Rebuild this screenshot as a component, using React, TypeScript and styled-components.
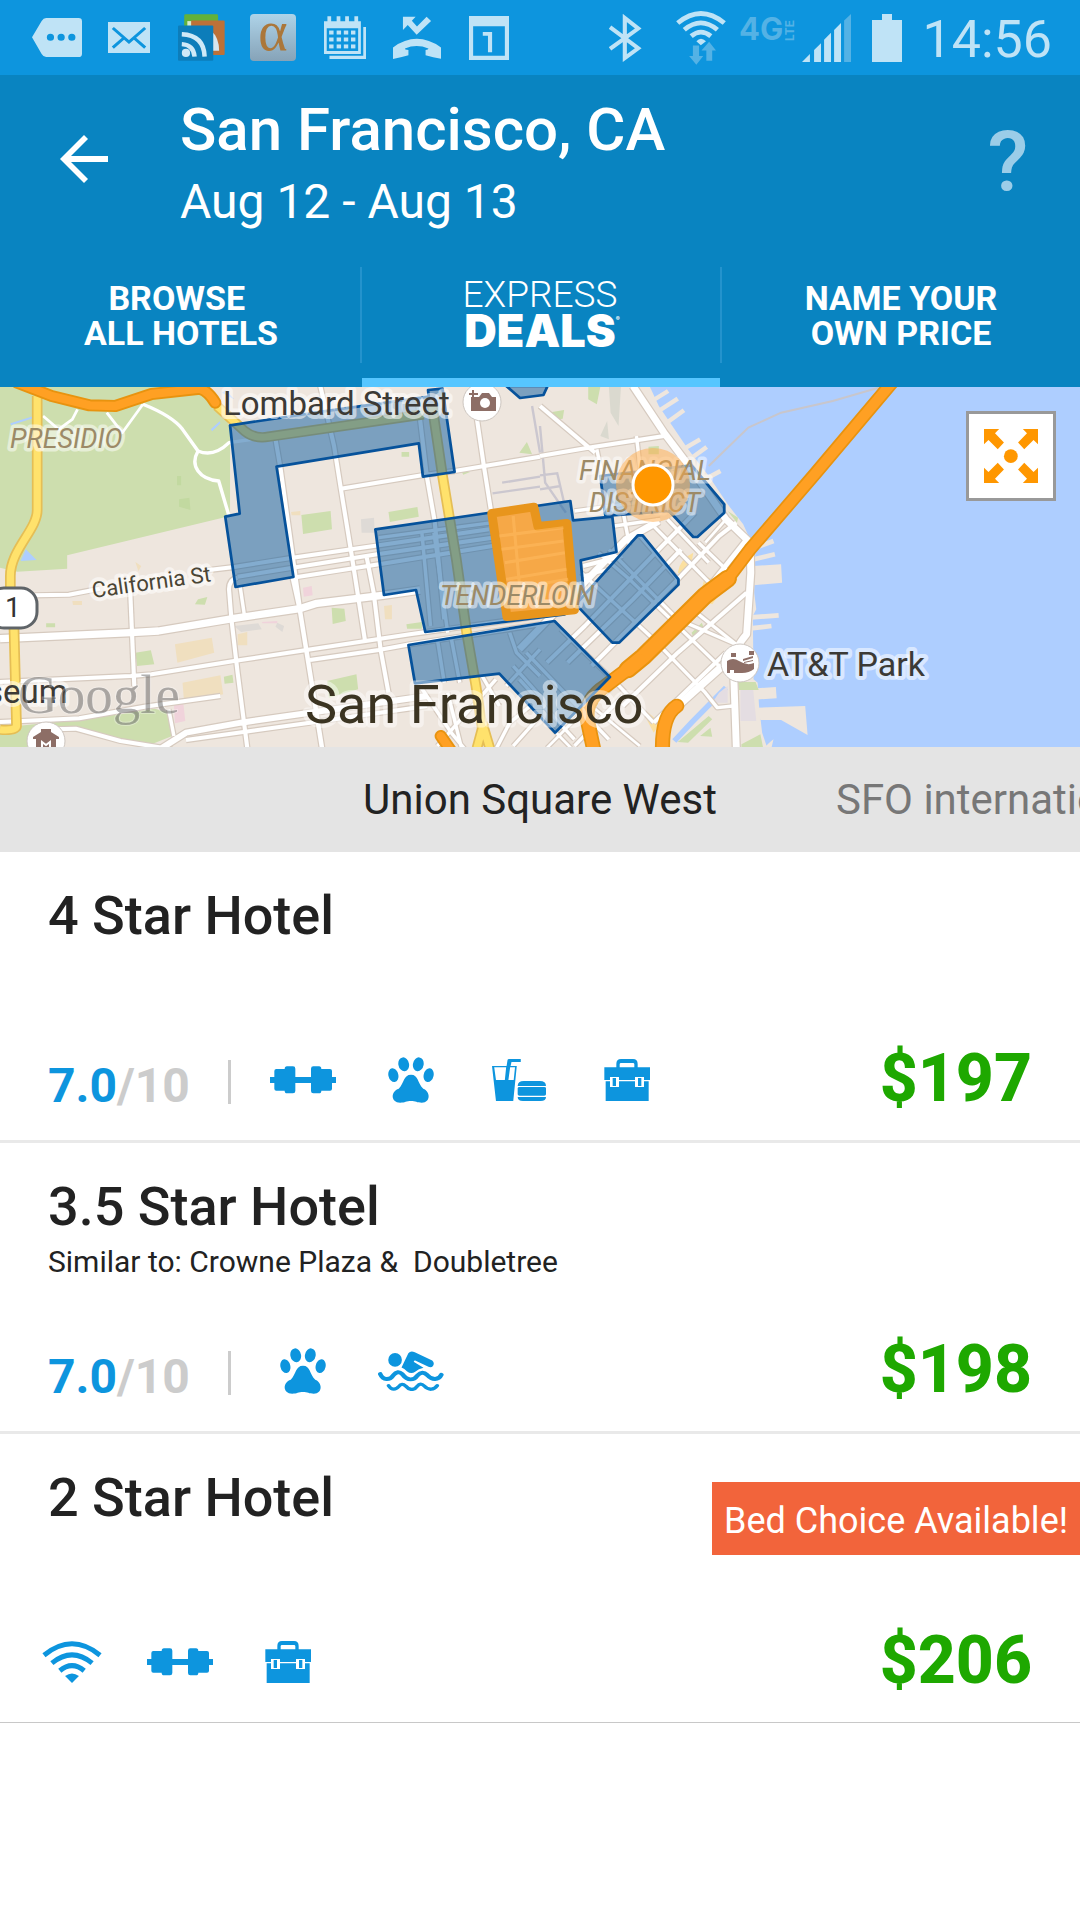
import React from "react";
import styled, { createGlobalStyle } from "styled-components";

const GlobalStyle = createGlobalStyle`
  *, *::before, *::after { box-sizing: border-box; }
  body {
    margin: 0;
    background: #fff;
    color: #222;
    font-family: Roboto, "Noto Sans", sans-serif;
  }
  h1, h2, p, ul { margin: 0; padding: 0; font-weight: inherit; }
  button { font: inherit; color: inherit; background: none; border: 0; padding: 0; cursor: pointer; }
  a { color: inherit; text-decoration: none; }
  ul { list-style: none; }
`;

/* ---------- Layout parts ---------- */

const StatusBar = styled.div`
  display: flex;
  align-items: center;
  justify-content: space-between;
  height: 75px;
  padding: 0 28px 0 21px;
  background: #0d95de;
  color: #bfe3f6;
`;

const StatusGroup = styled.div`
  display: flex;
  align-items: center;
`;

const StatusCell = styled.span<{ $w?: number; $raised?: boolean }>`
  display: flex;
  align-items: center;
  justify-content: center;
  width: ${(p) => p.$w ?? 72}px;
  height: 75px;
  padding-bottom: ${(p) => (p.$raised ? 18 : 0)}px;
`;

const Clock = styled.time`
  padding: 5px 0 0 6px;
  font-size: 52px;
  line-height: 70px;
  font-weight: 400;
`;

const Header = styled.header`
  background: #0984c1;
  color: #fff;
`;

const TitleRow = styled.div`
  display: flex;
  align-items: center;
  height: 168px;
`;

const BackButton = styled.button`
  display: flex;
  align-items: center;
  justify-content: center;
  width: 168px;
  height: 168px;
`;

const Titles = styled.div`
  flex: 1;
  padding: 14px 12px 0;
`;

const City = styled.h1`
  font-size: 60px;
  line-height: 72px;
  font-weight: 500;
`;

const Dates = styled.p`
  font-size: 48px;
  line-height: 72px;
`;

const HelpButton = styled.button`
  width: 144px;
  height: 168px;
  padding-top: 8px;
  font-size: 84px;
  line-height: 160px;
  font-weight: 500;
  color: #9bcde8;
`;

const Tabs = styled.nav`
  display: grid;
  grid-template-columns: repeat(3, 1fr);
  height: 144px;
  padding-top: 24px;
`;

const Tab = styled.button<{ $active?: boolean }>`
  display: flex;
  flex-direction: column;
  justify-content: space-between;
  height: 120px;

  &::after {
    content: "";
    align-self: stretch;
    height: 9px;
    margin-left: 2px;
    background: ${(p) => (p.$active ? "#56c6ff" : "transparent")};
  }
`;

const TabLabel = styled.span<{ $divided?: boolean }>`
  width: 100%;
  height: 96px;
  padding-top: 14px;
  border-left: 2px solid ${(p) => (p.$divided ? "#2493cd" : "transparent")};
  font-size: 34px;
  line-height: 35px;
  font-weight: 700;
  text-align: center;
`;

const ExpressLogo = styled.span`
  display: flex;
  flex-direction: column;
  align-items: center;
  width: 100%;
  height: 96px;
  padding: 10px 2px 0 0;
  border-left: 2px solid #2493cd;
`;

const ExpressThin = styled.span`
  font-size: 37px;
  line-height: 36px;
  font-weight: 300;
`;

const ExpressBold = styled.span`
  display: flex;
  font-family: Inter, "Liberation Sans", sans-serif;
  font-size: 45px;
  line-height: 36px;
  font-weight: 900;
`;

const Registered = styled.small`
  width: 0;
  font-size: 6px;
  line-height: 12px;
`;

const MapPanel = styled.section`
  position: relative;
  height: 360px;
  overflow: hidden;
  background: #aeceff;
`;

const MapDrawing = styled.svg`
  display: block;
  width: 100%;
  height: 100%;
  font-family: Roboto, "Noto Sans", sans-serif;
`;

const ExpandButton = styled.button`
  position: absolute;
  top: 24px;
  right: 24px;
  display: flex;
  align-items: center;
  justify-content: center;
  width: 90px;
  height: 90px;
  border: 3px solid #999;
  background: #fff;
`;

const AreaBar = styled.nav`
  display: grid;
  grid-template-columns: minmax(0, 1fr) auto minmax(0, 1fr);
  column-gap: 119px;
  height: 105px;
  overflow: hidden;
  background: #e4e4e4;
  font-size: 42px;
  line-height: 105px;
  white-space: nowrap;
`;

const Area = styled.button<{ $current?: boolean; $col: number }>`
  grid-column: ${(p) => p.$col};
  color: ${(p) => (p.$current ? "#222" : "#777")};
  text-align: left;
`;

const Hotels = styled.ul`
  display: flex;
  flex-direction: column;
`;

const Hotel = styled.li`
  border-bottom: 3px solid #e9e9e9;
  &:last-child {
    border-bottom: 1px solid #c8c8c8;
  }
`;

const HotelLink = styled.a`
  display: flex;
  flex-direction: column;
  justify-content: space-between;
  height: 288px;
  padding-top: 31px;
`;

const HotelTop = styled.div`
  display: flex;
  justify-content: space-between;
  padding-left: 48px;
`;

const HotelName = styled.h2`
  font-size: 54px;
  line-height: 66px;
  font-weight: 500;
`;

const Similar = styled.p`
  font-size: 30px;
  line-height: 44px;
  white-space: pre;
`;

const Badge = styled.span`
  align-self: flex-start;
  margin-top: 17px;
  padding: 5px 12px 0;
  background: #f2643b;
  color: #fff;
  font-size: 36px;
  line-height: 68px;
`;

const HotelBottom = styled.div`
  display: flex;
  align-items: center;
  height: 120px;
  padding: 0 48px 0 18px;
`;

const Rating = styled.div`
  display: flex;
  align-items: center;
  width: 213px;
  height: 44px;
  margin: 4px 18px 0 0;
  padding: 8px 0 0 30px;
  border-right: 3px solid #ccc;
  font-size: 48px;
  line-height: 36px;
  font-weight: 700;
`;

const Score = styled.span`
  color: #0d95de;
`;

const OutOf = styled.span`
  color: #ccc;
`;

const Amenities = styled.div`
  display: flex;
  flex: 1;
  color: #0d95de;
`;

const AmenityCell = styled.span`
  display: flex;
  align-items: center;
  justify-content: center;
  width: 108px;
`;

const Price = styled.strong`
  padding-bottom: 3px;
  color: #1ea800;
  font-size: 66px;
  line-height: 78px;
  font-weight: 800;
`;

/* ---------- Icons ---------- */

type GlyphProps = {
  w: number;
  h: number;
  box: string;
  label?: string;
  children: React.ReactNode;
};

const Glyph = ({ w, h, box, label, children }: GlyphProps) => (
  <svg
    width={w}
    height={h}
    viewBox={box}
    preserveAspectRatio="none"
    fill="currentColor"
    role={label ? "img" : undefined}
    aria-label={label}
    aria-hidden={label ? undefined : true}
  >
    {children}
  </svg>
);

const Dumbbell = () => (
  <Glyph w={66} h={28} box="441 624 198 84" label="Fitness center">
    <path d="M441 657h13v-18q0-6 6-6h25q0-8 7-8h18q7 0 7 7v25h47v-25q0-7 7-7h17q7 0 7 8h26q6 0 6 6v18h12v18h-12v17q0 6-6 6h-26q0 8-7 8h-17q-7 0-7-7v-24h-47v24q0 7-7 7h-18q-7 0-7-8h-25q-6 0-6-6v-17h-13z" />
  </Glyph>
);

const Paw = () => (
  <Glyph w={46} h={46} box="732 533 120 139" label="Pets allowed">
    <ellipse cx="746" cy="588" rx="13" ry="21" transform="rotate(-10 746 588)" />
    <ellipse cx="773" cy="555" rx="14" ry="21" transform="rotate(-8 773 555)" />
    <ellipse cx="811" cy="555" rx="14" ry="21" transform="rotate(8 811 555)" />
    <ellipse cx="838" cy="588" rx="13" ry="21" transform="rotate(10 838 588)" />
    <path d="M792 587C812 587 808 612 824 629C842 636 845 671 820 671C808 671 804 666 792 666C780 666 776 671 764 671C738 671 739 636 760 629C775 612 772 587 792 587Z" />
  </Glyph>
);

const Food = () => (
  <Glyph w={54} h={42} box="1101 87 122 126" label="Restaurant">
    <path d="M1101 108h33l2-17q0-4 4-4h26v9h-21l-2 12h14l-8 105h-39zM1106 112l4 38h20l3-38zM1142 112l-4 38h12l3-38z" fillRule="evenodd" />
    <path d="M1159 168q0-15 14-15h36q14 0 14 15zM1163 171h56q4 0 4 4v18q0 4-4 4h-56q-4 0-4-4v-18q0-4 4-4zM1159 201h64q0 12-12 12h-40q-12 0-12-12z" />
  </Glyph>
);

const Briefcase = () => (
  <Glyph w={46} h={42} box="795 603 138 126" label="Business center">
    <path d="M796 628h36v-10q0-15 14-15h36q14 0 14 15v10h37v38h-18v-9h-27v9h-48v-9h-27v9h-17zM842 628h44v-9q0-4-4-4h-36q-4 0-4 4z" fillRule="evenodd" />
    <path d="M800 670h13v17h27v-17h48v17h27v-17h14v59H800zM821 660h10v24h-10zM897 660h10v24h-10z" />
  </Glyph>
);

const Swimmer = () => (
  <Glyph w={66} h={40} box="987 542 174 121" label="Pool">
    <ellipse cx="1032" cy="569" rx="18" ry="21" />
    <path d="M1049 592L1067 549Q1073 540 1084 546L1130 571Q1137 578 1132 587Q1128 593 1120 590L1085 571Q1079 571 1083 576L1107 593Q1094 596 1085 605Q1074 613 1063 603Q1057 596 1049 592Z" />
    <g fill="none" stroke="currentColor" strokeLinecap="round" strokeLinejoin="round">
      <path strokeWidth="12" d="M993 612C1000 631 1018 631 1027 616Q1039 599 1051 612C1065 634 1082 631 1091 616Q1104 600 1117 615C1129 631 1147 631 1154 614" />
      <path strokeWidth="10" d="M1015 647C1023 661 1034 660 1042 649Q1050 637 1060 648C1070 662 1083 661 1090 649Q1099 636 1109 648C1121 662 1135 660 1143 647" />
    </g>
  </Glyph>
);

const WifiAmenity = () => (
  <Glyph w={60} h={42} box="125 602 182 127" label="Free Wi-Fi">
    <g fill="none" stroke="currentColor" strokeWidth="15">
      <path d="M131 645Q216 576 301 645" />
      <path d="M155 669Q216 619 277 669" />
      <path d="M179 692Q216 661 253 692" />
    </g>
    <path d="M195 708Q216 692 237 708L216 729Z" />
  </Glyph>
);

const BackArrow = () => (
  <Glyph w={48} h={48} box="0 0 48 48">
    <path d="M24 0l4 4-17 17h37v6H11l17 17-4 4L0 24z" />
  </Glyph>
);

const Expand = () => (
  <Glyph w={54} h={54} box="1289 128 157 163">
    <g fill="#ff9700">
      <ellipse cx="1367" cy="210" rx="20" ry="21" />
      <path d="M1289 128h44l-12 13 26 28-18 20-27-28-13 13zM1446 128h-44l12 13-26 28 18 20 27-28 13 13zM1289 291h44l-12-13 26-28-18-20-27 28-13-13zM1446 291h-44l12-13-26-28 18-20 27 28 13-13z" />
    </g>
  </Glyph>
);

/* ---------- Status bar icons ---------- */

const MessageIcon = () => (
  <Glyph w={50} h={39} box="93 54 145 117">
    <path fillRule="evenodd" d="M93 112L121 63Q126 54 134 54H228Q238 54 238 64V161Q238 171 228 171H134Q126 171 121 162ZM136 112a10 10 0 1 0 21 0a10 10 0 1 0-21 0ZM167 112a10 10 0 1 0 21 0a10 10 0 1 0-21 0ZM198 112a10 10 0 1 0 21 0a10 10 0 1 0-21 0Z" />
  </Glyph>
);

const MailIcon = () => (
  <Glyph w={42} h={31} box="314 66 122 93">
    <path d="M314 66h122v93H314z" />
    <path d="M328 84L375 126L422 84M328 143L360 114M422 143L390 114" fill="none" stroke="#0d95de" strokeWidth="9" />
  </Glyph>
);

const FeedIcon = () => (
  <Glyph w={47} h={47} box="515 45 136 139">
    <rect x="533" y="46" width="98" height="60" rx="4" fill="#62b13a" />
    <path d="M542 66h30v20h-30z" fill="#d5ecd0" />
    <rect x="553" y="64" width="97" height="102" rx="3" fill="#bd7138" />
    <path d="M612 95Q634 115 634 154H612Z" fill="#d8e6ee" />
    <rect x="515" y="79" width="102" height="104" rx="3" fill="#0c7dba" />
    <circle cx="538" cy="160" r="12" fill="#cfe9f7" />
    <path d="M526 134Q560 136 563 171M526 105Q590 108 592 171" fill="none" stroke="#cfe9f7" strokeWidth="13" />
  </Glyph>
);

const AlphaIcon = () => (
  <svg width="46" height="47" viewBox="0 0 46 47" aria-hidden="true">
    <defs>
      <linearGradient id="alphaTile" x1="0" y1="0" x2="0" y2="1">
        <stop offset="0" stopColor="#aed3e8" />
        <stop offset="1" stopColor="#86a3b8" />
      </linearGradient>
    </defs>
    <rect width="46" height="47" rx="4" fill="url(#alphaTile)" />
    <text x="23" y="36" textAnchor="middle" fontFamily="Liberation Serif, serif" fontSize="56" fill="#ab773a">
      α
    </text>
  </svg>
);

const CalendarIcon = () => (
  <Glyph w={42} h={43} box="940 50 123 130">
    <path d="M956 170h99V83h8v97H956z" />
    <path
      fillRule="evenodd"
      d="M940 66h10V51h11v15h16V51h11v15h14V51h11v15h16V51h11v15h8v99H940zM948 87v69h92V87z"
    />
    {[94, 115, 136].map((y) =>
      [955, 977, 998, 1019].map((x) => <path key={`${x}-${y}`} d={`M${x} ${y}h13v12h-13z`} />)
    )}
  </Glyph>
);

const MissedCallIcon = () => (
  <Glyph w={48} h={43} box="1141 48 140 130">
    <path d="M1170 50H1207L1196 62L1211 80L1239 50L1252 63L1210 105L1184 75L1170 90Z" />
    <path d="M1141 143Q1210 91 1281 143V177Q1258 174 1236 167V151Q1246 150 1244 146Q1210 132 1176 146Q1174 150 1186 151V167Q1163 174 1141 178Z" />
  </Glyph>
);

const DayIcon = () => (
  <Glyph w={40} h={44} box="1362 48 116 132">
    <path fillRule="evenodd" d="M1362 48h116v132h-116zM1374 79v88h92V79z" />
    <path d="M1402 96h27v61h-12v-50h-15z" />
  </Glyph>
);

const BluetoothIcon = () => (
  <Glyph w={33} h={48} box="200 38 96 146">
    <path fill="none" stroke="currentColor" strokeWidth="12" d="M203 78L285 142L246 172V50L285 82L203 144" />
  </Glyph>
);

const WifiStatusIcon = () => (
  <Glyph w={50} h={54} box="392 29 145 161">
    <g fill="none" stroke="currentColor" strokeWidth="14">
      <path d="M397 65Q464 8 532 65" />
      <path d="M416 85Q464 44 512 85" />
      <path d="M436 104Q464 80 493 104" />
    </g>
    <path d="M451 119Q464 104 479 119L464 131Z" />
    <path fill="#54b2e5" d="M441 132h18v31h12l-20 26-21-26h11zM480 177v-30h-14l22-26 20 26h-11v30z" />
  </Glyph>
);

const LteIcon = () => (
  <svg width="56" height="32" viewBox="0 0 56 32" fill="#54b2e5" aria-hidden="true" fontFamily="Inter, sans-serif">
    <text x="0" y="27" fontSize="31" fontWeight="700">4G</text>
    <text transform="translate(55 28) rotate(-90)" fontSize="12" fontWeight="700">LTE</text>
  </svg>
);

const SignalIcon = () => (
  <Glyph w={49} h={48} box="761 38 142 145">
    <path d="M761 183L784 159V183ZM796 147L816 126V183H796ZM825 116L845 95V183H825ZM854 86L874 65V183H854Z" />
    <path fill="#54b2e5" d="M883 58L903 38V183H883Z" />
  </Glyph>
);

const BatteryIcon = () => (
  <Glyph w={30} h={48} box="961 36 87 144">
    <path d="M990 36h29v18h29v126h-87V54h29z" />
  </Glyph>
);

/* ---------- Map ---------- */

/* Street geometry is kept in map units; the east half starts at x = 1568. */
type Street = [number, string];

const WEST_STREETS: Street[] = [
  [22, "M0 758L380 740L460 735L680 697L870 668L920 652L1110 628L1220 612"],
  [12, "M0 888L380 870L440 865L680 825L890 792L1190 745L1568 690"],
  [12, "M900 822L1100 792L1190 775L1568 715"],
  [12, "M100 628L200 626L290 608M600 553L680 543L850 515L1100 478L1420 430"],
  [12, "M690 572L850 545L1095 505L1430 455"],
  [12, "M850 575L1110 533L1430 480"],
  [10, "M1100 455L1430 410"],
  [12, "M0 1008L110 1003L230 997L420 962L640 930"],
  [18, "M470 1086L540 1040L700 1010L1240 930"],
  [12, "M540 1062L900 1010L1240 960"],
  [12, "M150 1030L220 1028L350 1065L500 1090"],
  [12, "M378 615L390 900"],
  [12, "M800 160L815 250L870 660"],
  [12, "M672 700L665 610Q665 580 690 575M672 700L690 860L718 1086"],
  [10, "M697 600L710 690"],
  [13, "M850 575L870 668L900 860L935 1086"],
  [12, "M930 0L970 180L990 310L1020 500L1060 765"],
  [12, "M1065 515L1085 620L1105 790L1128 920"],
  [12, "M1215 60L1240 275L1262 405L1290 700"],
  [10, "M1225 440L1250 720M1260 440L1300 740"],
  [12, "M1385 100L1405 240L1425 370"],
  [12, "M990 308L1225 268L1320 255L1568 212"],
  [10, "M1270 760L1290 890M1310 755L1335 890"],
  [10, "M490 970L505 1050"],
  [10, "M1220 900L1310 1040L1350 1090M1270 1080L1440 880M1340 1086L1300 920M1490 1080L1568 990"],
  [10, "M1480 740L1500 800L1568 870M1568 790L1470 900M1568 930L1490 840"],
  [10, "M1400 870L1450 960M1440 1090L1480 1010L1540 960"],
  [10, "M415 55Q500 90 530 130L575 195Q620 215 665 170L800 150"],
  [10, "M575 195C550 240 580 280 635 285L665 390"],
  [8, "M310 80L355 140L415 55M125 90L170 130L210 100L225 70"],
];

const EAST_STREETS: Street[] = [
  [20, "M270 0L360 140L440 250L540 400L610 470L612 560L600 745Q560 790 562 850L570 1086"],
  [12, "M0 210L140 185L360 150M0 60L160 200"],
  [10, "M280 150L290 240L300 300M165 190L185 290"],
  [10, "M100 375L280 350M215 420L350 400M240 370L260 480"],
  [20, "M-60 790L100 620L250 460L345 405"],
  [12, "M20 830L130 720L345 490L450 380M125 540L240 510"],
  [10, "M125 570L200 550"],
  [12, "M80 830L270 640L410 490M150 840L400 580L520 450L570 410"],
  [14, "M180 930L340 760L500 590L600 460"],
  [12, "M240 960L400 800L600 620M330 1010L540 800"],
  [22, "M400 960L530 840"],
  [10, "M320 410L430 525L520 620M370 400L490 530M200 490L400 700L580 780M290 450L400 580"],
  [10, "M120 560L330 760L480 920L515 965L560 960M170 500L260 580L450 770L530 850"],
  [10, "M430 660L600 800M60 730L230 900L330 1010M460 470L560 570"],
  [10, "M-40 800L200 1060M-60 880L100 1060M100 1080L240 930"],
  [8, "M0 990L90 1086M150 960L290 1080M540 400L480 470M20 1086L140 960"],
];

const PIERS: Street[] = [
  [13, "M325 45L372 15M340 78L400 38M362 115L418 73M415 190L465 160M435 220L484 183M470 285L524 255"],
  [14, "M600 495L678 465M600 525L682 505M605 695L693 688M605 728L672 720"],
  [34, "M610 925L686 920"],
];

const Streets = ({ list, casing }: { list: Street[]; casing?: boolean }) => (
  <>
    {list.map(([w, d]) => (
      <path key={d} d={d} strokeWidth={casing ? w + 7 : w} stroke={casing ? "#d6cabf" : "#fff"} />
    ))}
  </>
);

const EAST = "translate(1568 0)";

const CityMap = () => (
  <MapDrawing viewBox="0 0 1080 360" preserveAspectRatio="xMidYMid slice" role="img" aria-label="Map of San Francisco deal areas">
    <g transform="translate(0 -1) scale(0.34439 0.33333)">
      <path d="M0 0H3136V1086H0Z" fill="#eee6de" />
      {/* water */}
      <g transform={EAST}>
        <path
          fill="#aeceff"
          d="M318 0L345 60L430 190L490 270L545 355L590 415L612 465L625 500L622 620L628 670L618 690L620 880L632 890L636 960L645 1040L660 1086H1570V0Z"
        />
        <g fill="none" stroke="#eee6de">
          {PIERS.map(([w, d]) => (
            <path key={d} d={d} strokeWidth={w} />
          ))}
        </g>
        <path fill="#eee6de" d="M620 540L700 535L703 590L620 598ZM630 965L770 960L777 1047L700 1002L640 1002ZM650 1086L668 1068L678 1060L672 1086Z" />
        <path d="M390 1065L440 1010L540 905" stroke="#aeceff" strokeWidth="16" fill="none" />
        <path d="M990 3L850 45L700 80L605 125L490 240" stroke="#c8c6cc" strokeWidth="6" fill="none" />
        <path fill="#e4dde2" d="M582 900H618L628 1005H582ZM520 920L545 900V950H500Z" />
        <path
          fill="#cddeae"
          d="M575 888H626L635 912H578ZM585 1075L640 1045L648 1086H585ZM140 3H175L165 55L140 40ZM35 78L70 72L66 98L40 102ZM315 182L345 180V205H315ZM440 740L470 710L474 722L444 750ZM400 1068L490 990L500 1000L430 1070ZM465 1050L495 1025L500 1052ZM545 375L575 395L572 410ZM290 425L320 415L300 445Z"
        />
        <path fill="#dad9cf" d="M200 3H235L228 120L205 80ZM175 150L195 105L200 160Z" />
        <path fill="#fbe0a0" d="M400 560Q405 520 445 500L440 530Q415 550 425 570ZM480 570L540 600L500 655L460 640ZM290 960L350 1010L330 1040Z" />
      </g>
      {/* parks and blocks */}
      <path fill="#cddeae" d="M0 0H590L650 70L668 130V390L195 508V548L50 557L0 545Z" />
      <path fill="#eee6de" d="M600 0H700L668 118L640 60Z" />
      <path fill="#aeceff" d="M60 525L75 490L106 522ZM30 112L98 90V96L32 118ZM612 130L638 106L640 112L616 136ZM645 20L655 12L680 40Z" />
      <path
        fill="#cddeae"
        d="M875 387L960 375L964 430L880 444ZM1128 378L1212 363L1216 392L1132 408ZM1166 198H1188V212H1166ZM393 800L438 793L448 835L398 840ZM963 665L1000 668L1004 705L966 714ZM566 655L575 640L602 633L595 656ZM134 712H160V724H134ZM950 885L1035 865L1040 910L955 935ZM1180 715L1225 708V728H1182ZM650 872L675 866L678 890L652 893ZM0 1025L240 1000L450 968L490 980L500 1050L440 1075L350 1062L220 1028L120 1035L90 1086H0ZM1508 200L1530 168L1545 205ZM1340 255L1365 258L1345 266Z"
      />
      <path fill="#f0dfbf" d="M508 775L615 755L622 800L515 830ZM530 890L640 868L648 925L535 955ZM690 745L718 738V778H690ZM1115 660L1138 657V700H1118ZM393 528L410 540L402 556ZM845 378L872 375V388H847ZM210 645H238V657H212Z" />
      <path fill="#f0d3db" d="M880 605L905 600L908 628L882 632ZM505 955L532 948L538 1005L508 1012ZM760 708L805 705V712H762Z" />
      <path fill="#dedad6" d="M1048 400L1086 395L1088 440L1050 440ZM680 720L750 712L760 730L700 738ZM805 710L825 720L820 738L800 722Z" />
      <path fill="#c2d9a0" d="M520 340L550 335L553 372L520 362ZM514 270H526V298H514Z" />
      <path d="M1458 290L1568 272M1430 322L1568 302M1545 60L1568 200" stroke="#cbc7cf" strokeWidth="7" fill="none" />
      <g transform={EAST}>
        <path d="M0 120L15 290L75 380M0 268L50 262L70 350M0 310L60 300" stroke="#cbc7cf" strokeWidth="7" fill="none" />
      </g>

      {/* streets */}
      <g fill="none" strokeLinejoin="round">
        <Streets list={WEST_STREETS.slice(0, -3)} casing />
        <g transform={EAST}>
          <Streets list={EAST_STREETS} casing />
        </g>
        <Streets list={WEST_STREETS} />
        <g transform={EAST}>
          <Streets list={EAST_STREETS} />
        </g>
      </g>

      {/* arterials */}
      <g fill="none" strokeLinejoin="round">
        {(
          [
            ["#e5be55", 31],
            ["#ffe26c", 21],
          ] as const
        ).map(([stroke, w]) => (
          <g key={w} stroke={stroke} strokeWidth={w}>
            <path d="M108 30V370C110 430 30 490 30 570V620M40 700L48 1020Q46 1035 0 1031" />
            <path d="M630 60L710 135Q740 160 780 152L1230 85M1255 60L1285 270L1325 520L1355 740L1382 900L1405 1060M1405 1010L1385 1086M1400 1010L1422 1086" />
          </g>
        ))}
        <g strokeLinecap="round">
          {(
            [
              ["#e8930f", 36, 0],
              ["#ffa023", 25, 1],
            ] as const
          ).map(([stroke, w, inner]) => (
            <g key={w} stroke={stroke} strokeWidth={w}>
              <path d="M50 -10L150 30L260 58L335 60L440 24L580 8Q605 15 625 50" />
              <path d="M1280 1050L1310 1095" />
              <g transform={EAST}>
                <path strokeWidth={inner ? 30 : 40} d="M1022 -10L800 262L610 490L550 572L480 622" />
                <path strokeWidth={inner ? 42 : 54} d="M545 578L480 628L300 812L255 850" />
                <path strokeWidth={inner ? 34 : 44} d="M290 822L190 900Q130 940 137 1000L158 1100M397 960Q352 990 356 1100" />
              </g>
            </g>
          ))}
        </g>
      </g>

      {/* deal areas */}
      <g fill="#085aa0" fillOpacity="0.5" stroke="#06529b" strokeWidth="8" strokeLinejoin="round">
        <path d="M668 118L940 76L1245 32L1243 12L1285 8L1320 258L1228 272L1216 172L803 242L852 573L684 603L654 392L696 383Z" />
        <path d="M1090 430L1656 345L1664 403L1778 392L1790 498L1686 523L1694 610L1668 660L1640 685L1235 738L1208 612L1115 627Z" />
        <path d="M1186 777L1610 705L1771 873L1612 1040L1450 863L1205 892Z" />
        <path d="M1852 448H1866L1970 580V596L1798 770H1778L1672 655Z" />
        <path d="M1743 270L2008 238L2103 355V380L2025 453H2013L1943 375L1758 390Z" />
        <path d="M1470 0L1510 36L1578 27L1590 0Z" />
      </g>
      <path d="M1428 382L1550 363L1562 421L1646 412L1668 672L1472 692Z" fill="#ffa93d" fillOpacity="0.93" stroke="#e8951c" strokeWidth="26" strokeLinejoin="round" />
      <g fill="none" stroke="#ffb95e" strokeOpacity="0.6" strokeWidth="9">
        <path d="M1450 450L1636 425M1456 490L1636 465M1470 580L1645 550M1474 610L1650 580M1490 390L1515 670M1466 530L1640 500" />
      </g>
    </g>

    {/* labels */}
    <g fontSize="27" fontStyle="italic" fill="#9c8a67" stroke="#fff" strokeOpacity="0.5" strokeWidth="7" strokeLinejoin="round" paintOrder="stroke">
      <text x="10" y="61">PRESIDIO</text>
      <text x="579" y="93">FINANCIAL</text>
      <text x="589" y="125">DISTRICT</text>
      <text x="440" y="218">TENDERLOIN</text>
    </g>
    <g fill="#3c3a36" stroke="#fff" strokeOpacity="0.55" strokeWidth="8" strokeLinejoin="round" paintOrder="stroke">
      <text x="223" y="28" fontSize="33">Lombard Street</text>
      <text x="767" y="289" fontSize="34">AT&amp;T Park</text>
      <text x="-14" y="316" fontSize="33">seum</text>
      <text transform="translate(93 211) rotate(-8)" fontSize="22" fill="#4a4535">California St</text>
    </g>
    <text x="305" y="336" fontSize="54" fill="#3b3422" stroke="#fff" strokeOpacity="0.45" strokeWidth="9" strokeLinejoin="round" paintOrder="stroke">
      San Francisco
    </text>
    <text x="18" y="326" fontSize="55" fontFamily="Liberation Serif, serif" fill="#555" fillOpacity="0.45" stroke="#fff" strokeOpacity="0.3" strokeWidth="2" paintOrder="stroke">
      Google
    </text>

    {/* route shield */}
    <rect x="-12" y="201" width="49" height="40" rx="16" fill="#fff" stroke="#5f6468" strokeWidth="3" />
    <text x="5" y="230" fontSize="28" fill="#333">1</text>

    {/* points of interest */}
    <g fill="#fff" stroke="#cdc6c0">
      <circle cx="482" cy="15" r="19" />
      <circle cx="740" cy="276" r="19" />
      <circle cx="46" cy="354" r="19" />
    </g>
    <g fill="#8d6e66">
      <path d="M471 10h8l3-4h7l3 4h4v14h-25z" />
      <path d="M469 7h9M473 3v9" stroke="#8d6e66" strokeWidth="2" />
      <circle cx="485" cy="16" r="5" fill="#fff" />
      <path d="M727 274q6-4 12 0q8 5 15 2v6q-5 4-12 4h-8v-3h-4v3h-3zM731 266h5v4h-5zM749 264h5v4h-5zM743 272l10-3v2l-10 3zM744 275l9-2v1l-9 2z" />
      <path d="M33 350l8-5v-3h10v3l8 5v2H33zM36 352h20v9H36z" />
      <path d="M42 361v-6l4 3 4-3v6" fill="none" stroke="#fff" strokeWidth="2" />
    </g>

    {/* current location */}
    <circle cx="653" cy="98" r="37" fill="#ffac4a" fillOpacity="0.5" />
    <circle cx="653" cy="98" r="20" fill="#ff9700" stroke="#fff" strokeWidth="3" />
  </MapDrawing>
);

/* ---------- Data ---------- */

type HotelDeal = {
  name: string;
  similar?: string;
  score?: string;
  amenities: React.FC[];
  price: string;
  badge?: string;
};

const DEALS: HotelDeal[] = [
  { name: "4 Star Hotel", score: "7.0", amenities: [Dumbbell, Paw, Food, Briefcase], price: "$197" },
  {
    name: "3.5 Star Hotel",
    similar: "Similar to: Crowne Plaza &  Doubletree",
    score: "7.0",
    amenities: [Paw, Swimmer],
    price: "$198",
  },
  { name: "2 Star Hotel", amenities: [WifiAmenity, Dumbbell, Briefcase], price: "$206", badge: "Bed Choice Available!" },
];

const NOTIFICATIONS = [MessageIcon, MailIcon, FeedIcon, AlphaIcon, CalendarIcon, MissedCallIcon, DayIcon];

export default function App() {
  return (
    <>
      <GlobalStyle />
      <StatusBar>
        <StatusGroup>
          {NOTIFICATIONS.map((Icon, i) => (
            <StatusCell key={i}>
              <Icon />
            </StatusCell>
          ))}
        </StatusGroup>
        <StatusGroup>
          <StatusCell $w={78}><BluetoothIcon /></StatusCell>
          <StatusCell><WifiStatusIcon /></StatusCell>
          <StatusCell $w={60} $raised><LteIcon /></StatusCell>
          <StatusCell $w={60}><SignalIcon /></StatusCell>
          <StatusCell $w={60}><BatteryIcon /></StatusCell>
          <Clock>14:56</Clock>
        </StatusGroup>
      </StatusBar>

      <Header>
        <TitleRow>
          <BackButton aria-label="Back">
            <BackArrow />
          </BackButton>
          <Titles>
            <City>San Francisco, CA</City>
            <Dates>Aug 12 - Aug 13</Dates>
          </Titles>
          <HelpButton aria-label="Help">?</HelpButton>
        </TitleRow>
        <Tabs>
          <Tab>
            <TabLabel>BROWSE&nbsp;<br />ALL HOTELS</TabLabel>
          </Tab>
          <Tab $active>
            <ExpressLogo>
              <ExpressThin>EXPRESS</ExpressThin>
              <ExpressBold>DEALS<Registered>®</Registered></ExpressBold>
            </ExpressLogo>
          </Tab>
          <Tab>
            <TabLabel $divided>NAME YOUR<br />OWN PRICE</TabLabel>
          </Tab>
        </Tabs>
      </Header>

      <MapPanel>
        <CityMap />
        <ExpandButton aria-label="Expand map">
          <Expand />
        </ExpandButton>
      </MapPanel>

      <AreaBar>
        <Area $current $col={2}>Union Square West</Area>
        <Area $col={3}>SFO international</Area>
      </AreaBar>

      <Hotels>
        {DEALS.map((deal) => (
          <Hotel key={deal.name}>
            <HotelLink href="#">
              <HotelTop>
                <div>
                  <HotelName>{deal.name}</HotelName>
                  {deal.similar && <Similar>{deal.similar}</Similar>}
                </div>
                {deal.badge && <Badge>{deal.badge}</Badge>}
              </HotelTop>
              <HotelBottom>
                {deal.score && (
                  <Rating>
                    <Score>{deal.score}</Score>
                    <OutOf>/10</OutOf>
                  </Rating>
                )}
                <Amenities>
                  {deal.amenities.map((Icon, i) => (
                    <AmenityCell key={i}>
                      <Icon />
                    </AmenityCell>
                  ))}
                </Amenities>
                <Price>{deal.price}</Price>
              </HotelBottom>
            </HotelLink>
          </Hotel>
        ))}
      </Hotels>
    </>
  );
}
